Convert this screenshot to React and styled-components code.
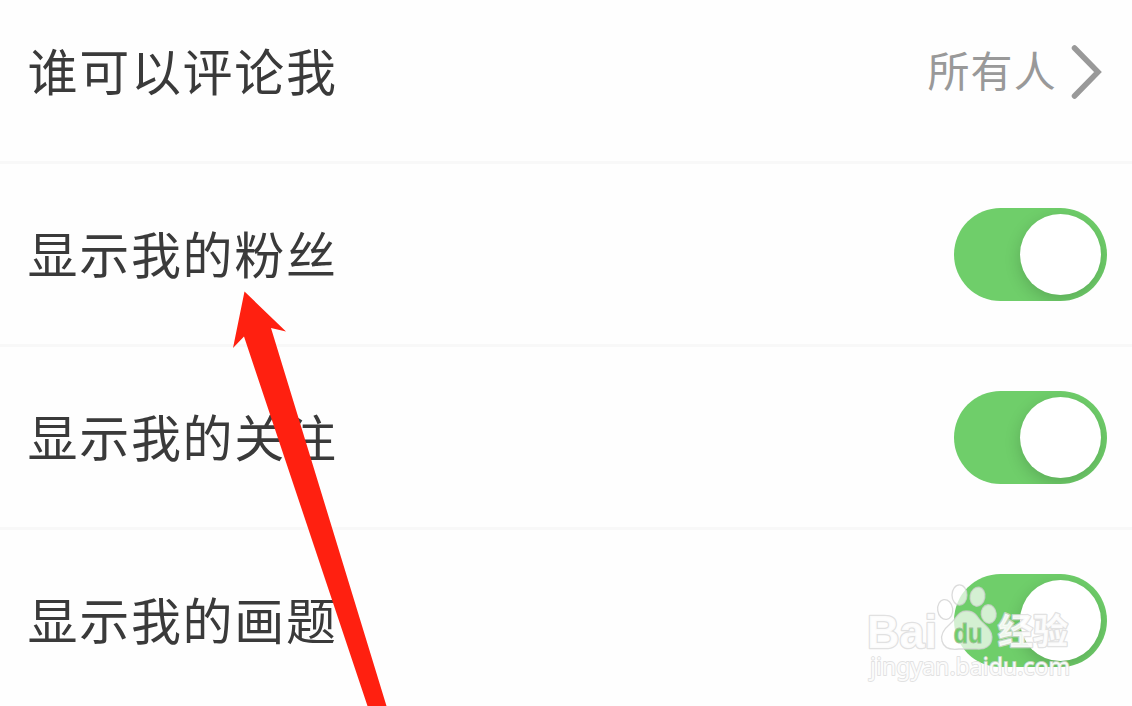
import React, { useState } from 'react';
import styled, { createGlobalStyle } from 'styled-components';

const GlobalStyle = createGlobalStyle`
  body {
    margin: 0;
    background: #fefefe;
    font-family: 'Liberation Sans', 'Noto Sans CJK SC', sans-serif;
  }
`;

const Screen = styled.div`
  position: relative;
  width: 1132px;
  height: 706px;
  overflow: hidden;
`;

const List = styled.div`
  margin-top: -19px;
`;

const Row = styled.div`
  display: flex;
  align-items: center;
  justify-content: space-between;
  box-sizing: border-box;
  height: 183px;
  padding: 1px 25px 0 27.5px;
  border-bottom: 3px solid #f8f8f8;
`;

const Label = styled.span`
  padding-bottom: 6px;
  font-family: 'Noto Sans CJK SC', sans-serif;
  font-size: 50px;
  line-height: 60px;
  letter-spacing: 1.7px;
  color: #3a3a3a;
`;

const Value = styled.div`
  display: flex;
  align-items: center;
  gap: 13px;
  padding-right: 5px;
`;

const ValueText = styled.span`
  padding-bottom: 6px;
  font-family: 'Noto Sans CJK SC', sans-serif;
  font-size: 42px;
  line-height: 60px;
  letter-spacing: 1.2px;
  color: #999;
`;

const Toggle = styled.button`
  display: flex;
  justify-content: ${(props) => (props.$on ? 'flex-end' : 'flex-start')};
  width: 153px;
  height: 93px;
  padding: 6px;
  border: none;
  border-radius: 47px;
  overflow: hidden;
  background: ${(props) => (props.$on ? '#6fce6a' : '#e5e5e5')};
`;

const Knob = styled.span`
  width: 81px;
  height: 81px;
  border-radius: 50%;
  background: #fff;
  box-shadow: 0 5px 16px rgba(0, 0, 0, 0.17);
`;

const Pointer = styled.svg`
  position: absolute;
  left: 0;
  top: 0;
  pointer-events: none;
`;

const Watermark = styled.svg`
  position: absolute;
  left: 850px;
  top: 570px;
  pointer-events: none;
`;

const Mark = styled.text`
  fill: #fff;
  fill-opacity: 0.9;
  stroke: #dadada;
  stroke-opacity: 0.8;
  stroke-width: ${(props) => (props.$bold ? 2.6 : 1.8)}px;
  stroke-linejoin: round;
  paint-order: stroke;
  font-family: ${(props) => props.$font}, sans-serif;
  font-size: ${(props) => props.$size}px;
  font-weight: ${(props) => (props.$bold ? 700 : 400)};
`;

const switches = [
  { id: 'fans', label: '显示我的粉丝' },
  { id: 'follows', label: '显示我的关注' },
  { id: 'topics', label: '显示我的画题' },
];

const SwitchRow = ({ label }) => {
  const [on, setOn] = useState(true);
  return (
    <Row>
      <Label>{label}</Label>
      <Toggle $on={on} onClick={() => setOn(!on)} aria-label={label}>
        <Knob />
      </Toggle>
    </Row>
  );
};

const BaiduMark = () => (
  <Watermark width="240" height="125" viewBox="850 570 240 125">
    <g fill="#fff" fillOpacity="0.7" stroke="#cfcfcf" strokeOpacity="0.75" strokeWidth="1.3">
      <ellipse cx="945.2" cy="609.5" rx="7.5" ry="10" transform="rotate(-8 945.2 609.5)" />
      <ellipse cx="959.5" cy="595" rx="7.5" ry="10.2" />
      <ellipse cx="977.5" cy="596.7" rx="7.4" ry="9.6" transform="rotate(10 977.5 596.7)" />
      <ellipse cx="988.7" cy="614" rx="7.5" ry="9.3" transform="rotate(-6 988.7 614)" />
      <path d="M966 611C958 611 957 618 950 624C944 629 940 634 942 641C944 649 951 650 959 649H976C985 650 992 646 992 637C992 628 982 624 977 616C974 612 971 611 966 611Z" />
    </g>
    <Mark $font="'Liberation Sans'" $size={47} $bold x="867" y="648" textLength="70" lengthAdjust="spacingAndGlyphs">
      Bai
    </Mark>
    <Mark $font="'Noto Sans CJK SC'" $size={35} $bold x="998" y="644" textLength="70" lengthAdjust="spacingAndGlyphs">
      经验
    </Mark>
    <Mark $font="'Noto Sans'" $size={23} x="870" y="675" textLength="200" lengthAdjust="spacingAndGlyphs">
      jingyan.baidu.com
    </Mark>
    <text
      x="953.5"
      y="643"
      fill="#6fce6a"
      stroke="#9fc09c"
      strokeWidth="0.8"
      fontFamily="Liberation Sans"
      fontWeight="bold"
      fontSize="27"
      textLength="29"
      lengthAdjust="spacingAndGlyphs"
    >
      du
    </text>
  </Watermark>
);

const App = () => {
  return (
    <Screen>
      <GlobalStyle />
      <List>
        <Row>
          <Label>谁可以评论我</Label>
          <Value>
            <ValueText>所有人</ValueText>
            <svg width="32" height="56" viewBox="0 0 32 56" fill="none">
              <path d="M4.5 4L28 28L4.5 52" stroke="#999" strokeWidth="5.5" strokeLinecap="round" />
            </svg>
          </Value>
        </Row>
        {switches.map((item) => (
          <SwitchRow key={item.id} label={item.label} />
        ))}
      </List>
      <Pointer width="1132" height="706">
        <polygon points="244.5,291.5 286,331.5 271,328 386.5,706 367.5,706 244,336.5 233,348" fill="#ff2010" />
      </Pointer>
      <BaiduMark />
    </Screen>
  );
};

export default App;
